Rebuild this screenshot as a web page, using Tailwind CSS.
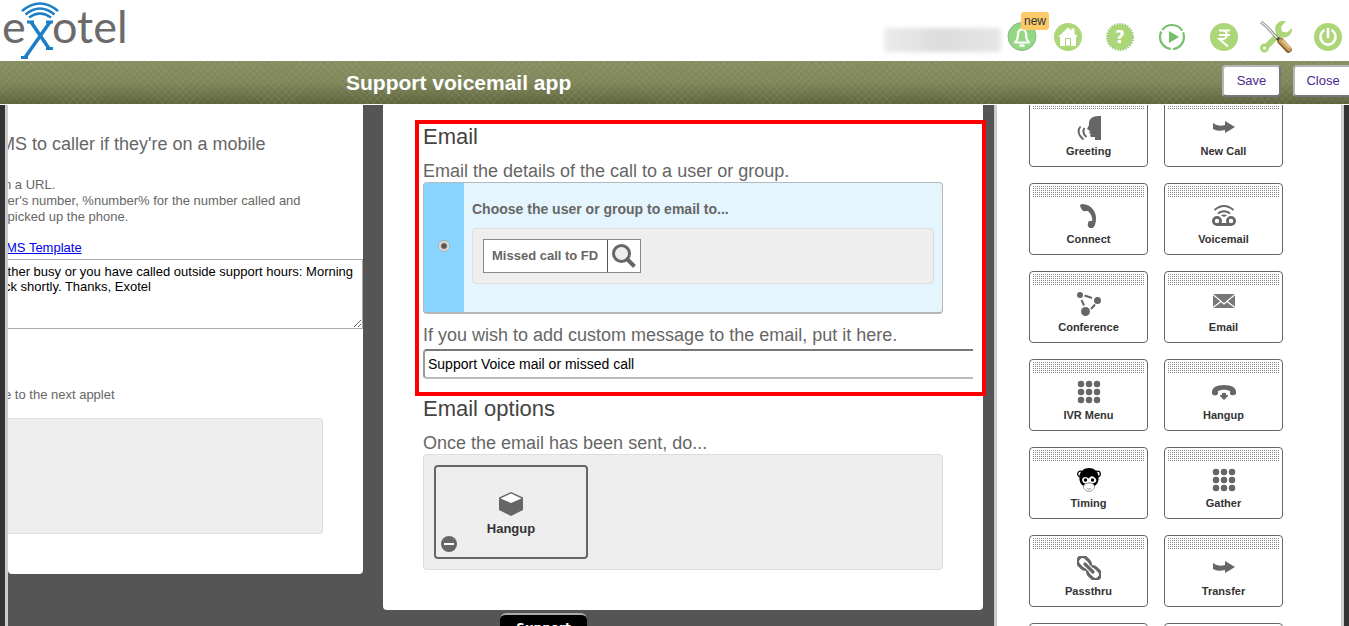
<!DOCTYPE html>
<html lang="en">
<head>
    <meta charset="UTF-8">
    <meta name="viewport" content="width=device-width, initial-scale=1.0">
    <title>Support voicemail app - Exotel</title>
    <script src="https://cdn.jsdelivr.net/npm/@tailwindcss/browser@4"></script>
</head>
<body class="h-screen flex flex-col overflow-hidden bg-white font-['Liberation_Sans',Arial,sans-serif] text-[13px] leading-4 text-[#666]">

    <!-- Top header -->
    <header class="h-[61px] shrink-0 flex items-start justify-between">
        <a href="#" aria-label="Exotel">
            <svg class="w-[130px] h-[61px] overflow-visible" viewBox="0 0 130 61" fill="none">
                <g fill="#6b6b6b" font-family="Lato, sans-serif" font-size="45">
                    <text x="2" y="43">e</text>
                    <text x="52" y="43">otel</text>
                </g>
                <g stroke="#1c7fc6" stroke-width="3">
                    <path d="M27 22h7M46 22h7M46 48.500h7M21 57.500h7"/>
                    <path stroke-width="3.500" d="M31 22L49 48.500M50 22L25 57.500"/>
                    <path stroke-width="2.500" d="M22 11Q40-4 58 11M25.500 14.500Q40 2.500 54.500 14.500M29 17.500Q40 9.500 51 17.500"/>
                </g>
            </svg>
        </a>
        <div class="flex items-center gap-[17px] pt-[21px] pr-[7px]">
            <div class="flex items-center gap-1.5">
                <span class="mt-1.5 w-[117px] h-6 rounded-sm bg-linear-to-r from-[#eceaec] via-[#dddcdd] to-[#e6e5e7] blur-[2px]"></span>
                <button type="button" aria-label="Notifications" class="relative">
                    <svg class="size-[30px]" viewBox="0 0 30 30" fill="none">
                        <circle cx="15" cy="14.500" r="14" fill="#93d984" stroke="#8fb58c"/>
                        <path d="M8 20.500c2-2 3-4 3-8 0-3 1.500-5 4-5s4 2 4 5c0 4 1 6 3 8z" stroke="#fff" stroke-width="2.200" stroke-linejoin="round"/>
                        <path d="M15 5v2.500M12.500 23.500h5" stroke="#fff" stroke-width="2.500"/>
                    </svg>
                    <span class="absolute left-3.5 -top-[10px] h-[18px] w-7 rounded-[3px] bg-[#fdca6a] text-[12px] leading-[18px] text-[#333]">new</span>
                </button>
            </div>
            <nav class="flex items-center gap-6">
                <a href="#" aria-label="Home">
                    <svg class="size-7" viewBox="0 0 28 28">
                        <circle cx="14" cy="14" r="14" fill="#acd678"/>
                        <path d="M4 14L14 4.500l3.500 3.300V5.500h3v5L24 14h-2v9H6v-9z" fill="#fff"/>
                        <path d="M11.500 15.500h5V23h-5z" fill="#fff" stroke="#acd678"/>
                    </svg>
                </a>
                <a href="#" aria-label="Help">
                    <svg class="size-7" viewBox="0 0 28 28">
                        <circle cx="14" cy="14" r="12.500" fill="#acd678"/>
                        <circle cx="14" cy="14" r="12.800" fill="none" stroke="#9ecb70" stroke-width="2.400" stroke-dasharray="1.600 1.080"/>
                        <text x="14" y="20" text-anchor="middle" font-size="17" font-weight="bold" fill="#fff" font-family="DejaVu Sans, sans-serif">?</text>
                    </svg>
                </a>
                <a href="#" aria-label="Play tour">
                    <svg class="size-7" viewBox="0 0 28 28">
                        <circle cx="14" cy="14" r="12" fill="none" stroke="#75c06b" stroke-width="2.200" stroke-dasharray="23.130 2" stroke-dashoffset="-19.900"/>
                        <path d="M11 8v12L21 14z" fill="#75c06b"/>
                    </svg>
                </a>
                <a href="#" aria-label="Billing">
                    <svg class="size-7" viewBox="0 0 28 28" fill="none">
                        <circle cx="14" cy="14" r="14" fill="#acd678"/>
                        <path d="M9 7.500h11M9 12h11M9 7.500h4c5 0 5 8.500 0 8.500H9.500l8.500 7.500" stroke="#fff" stroke-width="2.200"/>
                    </svg>
                </a>
                <a href="#" aria-label="Settings" class="-mx-0.5">
                    <svg class="size-8" viewBox="0 0 32 32" fill="none">
                        <path d="M6 26L19 13" stroke="#acd678" stroke-width="5.500"/>
                        <path fill-rule="evenodd" d="M0 27a4.500 4.500 0 1 0 9 0 4.500 4.500 0 1 0-9 0M3 27a1.500 1.500 0 1 0 3 0 1.500 1.500 0 1 0-3 0" fill="#acd678"/>
                        <path d="M26 0a8.500 8.500 0 1 0 6 7l-5 4.500-5-1-1-4.500z" fill="#acd678"/>
                        <path d="M1 1l5 4 12 13" stroke="#888" stroke-width="3"/>
                        <path d="M1 1l5 4 12 13" stroke="#eee" stroke-width="1.300"/>
                        <path d="M16 18l3-2 2 2-2 3z" fill="#333"/>
                        <path d="M20.500 20l8 8.500" stroke="#7a5a2c" stroke-width="6.500" stroke-linecap="round"/>
                        <path d="M21 20l8 8" stroke="#c9a05c" stroke-width="4.500" stroke-linecap="round"/>
                        <path d="M22.500 19.500l7 7" stroke="#ecd09a" stroke-width="1.500" stroke-linecap="round"/>
                    </svg>
                </a>
                <a href="#" aria-label="Log out">
                    <svg class="size-7" viewBox="0 0 28 28" fill="none">
                        <circle cx="14" cy="14" r="14" fill="#acd678"/>
                        <path d="M10.500 7a7.500 7.800 0 1 0 7 0M14 5v10" stroke="#fff" stroke-width="2.500"/>
                    </svg>
                </a>
            </nav>
        </div>
    </header>

    <!-- App title bar -->
    <div class="h-[43px] mb-px shrink-0 overflow-hidden flex items-center justify-between bg-[repeating-linear-gradient(45deg,#ffffff0d_0_1px,transparent_1px_5px),repeating-linear-gradient(-45deg,#ffffff0d_0_1px,transparent_1px_5px),linear-gradient(#868e60,#7f865a_50%,#5f643e)]">
        <h1 class="pl-[346px] text-[21px] leading-7 font-bold text-white whitespace-nowrap">Support voicemail app</h1>
        <div class="flex gap-3 pb-1 -mr-1">
            <button type="button" class="h-8 w-[59px] rounded border-2 border-[#b5b5b5] border-b-[#77777c] border-r-[#77777c] bg-white text-[#4b2a8c]">Save</button>
            <button type="button" class="h-8 w-[60px] rounded border-2 border-[#b5b5b5] border-b-[#77777c] bg-white text-[#4b2a8c]">Close</button>
        </div>
    </div>

    <main class="flex-1 min-h-0 flex bg-[#333] pl-[5px] pr-[5px]">
        <!-- Flow canvas -->
        <div class="flex-1 min-w-0 overflow-hidden flex items-start gap-5 bg-[#555] border-l-3 border-[#ccc] pr-[11px]">

            <!-- SMS applet, scrolled partly out of view -->
            <section class="flex-1 min-w-0 overflow-hidden rounded-b bg-white pt-7 pb-10 whitespace-nowrap">
                <h3 class="-ml-2 text-[18px] leading-[22px]">MS to caller if they're on a mobile</h3>
                <p class="-ml-1 mt-[22px]">n a URL.<br>&nbsp;er's number, %number% for the number called and<br>&nbsp;picked up the phone.</p>
                <a href="#" class="block -ml-0.5 mt-[15px] text-[#00e] underline">MS Template</a>
                <div class="-ml-2 mt-[3px] flex">
                    <textarea aria-label="SMS text" class="flex-1 h-[70px] border border-[#a9a9a9] pl-[3px] pt-1 leading-[15px] text-black resize">&nbsp;ther busy or you have called outside support hours: Morning
ck shortly. Thanks, Exotel</textarea>
                </div>
                <p class="-ml-1 mt-[58px]">e to the next applet</p>
                <div class="mt-[15px] mr-10 h-[116px] rounded-r border border-l-0 border-[#ddd] bg-[#eee]"></div>
            </section>

            <!-- Voicemail applet -->
            <section class="relative w-[600px] shrink-0 rounded-b bg-white px-10 pt-[18px] pb-10">
                <h3 class="text-[22px] leading-7 text-[#444]">Email</h3>
                <p class="mt-[9px] text-[18px] leading-[22px]">Email the details of the call to a user or group.</p>
                <div class="h-[132px] flex overflow-hidden rounded border border-b-2 border-[#b5b8ba] bg-[#e4f5fe]">
                    <div class="w-10 pb-1 shrink-0 flex items-center justify-center bg-[#87d5ff]">
                        <input type="radio" id="emailTo" name="emailTo" checked class="size-3 appearance-none rounded-full border border-[#aaa] bg-[radial-gradient(circle,#555_0_2px,#e4e4e4_4px)]">
                    </div>
                    <div class="flex-1 p-2 pt-[18px]">
                        <label for="emailTo" class="block text-[14px] leading-4 font-bold">Choose the user or group to email to...</label>
                        <div class="mt-[11px] h-14 flex items-center rounded border border-[#ddd] bg-[#eee] px-2.5">
                            <div class="h-[34px] flex border border-[#888] bg-white">
                                <span class="w-[123px] pl-2 font-bold leading-8">Missed call to FD</span>
                                <button type="button" aria-label="Search" class="w-[33px] border-l border-[#555] flex items-center justify-center">
                                    <svg class="size-6" viewBox="0 0 24 24" fill="none" stroke="#666">
                                        <circle cx="9.500" cy="9.500" r="8" fill="#eee" stroke-width="3"/>
                                        <path d="M15.500 15.500L22.500 22.500" stroke-width="4"/>
                                    </svg>
                                </button>
                            </div>
                        </div>
                    </div>
                </div>
                <label for="customMessage" class="block mt-2.5 text-[18px] leading-[22px]">If you wish to add custom message to the email, put it here.</label>
                <div class="-mr-[30px] mt-[3px] flex">
                    <input type="text" id="customMessage" value="Support Voice mail or missed call"
                           class="flex-1 h-[30px] rounded-l border-2 border-r-0 border-t-[#777] border-l-[#999] border-b-[#bbb] pl-[3px] text-[14px] text-black">
                </div>

                <h3 class="mt-4 text-[22px] leading-7 text-[#444]">Email options</h3>
                <p class="mt-[9px] text-[18px] leading-[22px]">Once the email has been sent, do...</p>
                <div class="h-[116px] rounded border border-[#ddd] bg-[#eee] p-2.5">
                    <div class="relative w-[154px] h-[94px] rounded border-2 border-[#666] flex flex-col items-center pt-[25px]">
                        <svg class="size-6" viewBox="0 0 24 24">
                            <path d="M12 0l12 5.500V18l-12 6L0 18V5.500z" fill="#666"/>
                            <path d="M12 1.500l10.500 5L12 11 1.500 6.500z" fill="#fff"/>
                        </svg>
                        <span class="mt-[5px] font-bold text-[#333]">Hangup</span>
                        <button type="button" aria-label="Remove" class="absolute left-[5px] bottom-[5px]">
                            <svg class="size-4" viewBox="0 0 16 16"><circle cx="8" cy="8" r="8" fill="#666"/><path d="M3 7h10v2H3z" fill="#fff"/></svg>
                        </button>
                    </div>
                </div>
                <div class="absolute left-8 top-[15px] w-[571px] h-[276px] border-4 border-[#f00] pointer-events-none"></div>
            </section>
        </div>

        <!-- Applet palette -->
        <aside class="w-[350px] shrink-0 overflow-hidden border-x-3 border-[#ccc] bg-white pl-8">
            <div class="-mt-2.5 grid grid-cols-[119px_119px] gap-4 text-[11px] font-bold text-center text-[#333]">
                <div class="h-[72px] rounded border border-[#666] p-0.5 flex flex-col items-center">
                    <div class="h-3 w-full bg-[conic-gradient(#888_25%,transparent_0)] bg-[length:2px_2px]"></div>
                    <svg class="size-6 mt-1.5" viewBox="0 0 24 24" fill="none" stroke="#666">
                        <path d="M24 0v24h-6v-3h-4l-1-2 1-1-2-1 1-2-3-2 2-4C11 3 16 0 21 0z" fill="#666" stroke="none"/>
                        <path d="M7.500 12q-3 5 2 9M3.500 10.500q-5 6 3 13" stroke-width="1.900"/>
                    </svg>
                    <span class="mt-[3px]">Greeting</span>
                </div>
                <div class="h-[72px] rounded border border-[#666] p-0.5 flex flex-col items-center">
                    <div class="h-3 w-full bg-[conic-gradient(#888_25%,transparent_0)] bg-[length:2px_2px]"></div>
                    <svg class="size-6 mt-1.5" viewBox="0 0 24 24" fill="#666"><path d="M1 7q5 4 12 2V5l10 6-10 6v-3Q5 16 1 13z"/></svg>
                    <span class="mt-[3px]">New Call</span>
                </div>
                <div class="h-[72px] rounded border border-[#666] p-0.5 flex flex-col items-center">
                    <div class="h-3 w-full bg-[conic-gradient(#888_25%,transparent_0)] bg-[length:2px_2px]"></div>
                    <svg class="size-6 mt-1.5" viewBox="0 0 24 24" fill="#666"><path d="M3 2q0-2 3-2c9 1 13 8 13 14q0 7-3 10h-3q-3-1-2-5l1-2 3 0q1-5-4-10L9 7Q7 8 5 6z"/></svg>
                    <span class="mt-[3px]">Connect</span>
                </div>
                <div class="h-[72px] rounded border border-[#666] p-0.5 flex flex-col items-center">
                    <div class="h-3 w-full bg-[conic-gradient(#888_25%,transparent_0)] bg-[length:2px_2px]"></div>
                    <svg class="size-6 mt-1.5" viewBox="0 0 24 24" fill="none" stroke="#666">
                        <path d="M2.500 6Q12-2 21.500 6M6 9.500Q12 5 18 9.500" stroke-width="1.900"/>
                        <path d="M9 11.500q3-2 6 0l-3 1.500z" fill="#666" stroke="none"/>
                        <circle cx="5" cy="17" r="3.600" stroke-width="2.800"/>
                        <circle cx="19" cy="17" r="3.600" stroke-width="2.800"/>
                        <path d="M5 20.500h14" stroke-width="3"/>
                    </svg>
                    <span class="mt-[3px]">Voicemail</span>
                </div>
                <div class="h-[72px] rounded border border-[#666] p-0.5 flex flex-col items-center">
                    <div class="h-3 w-full bg-[conic-gradient(#888_25%,transparent_0)] bg-[length:2px_2px]"></div>
                    <svg class="size-6 mt-1.5" viewBox="0 0 24 24" fill="#666">
                        <circle cx="3" cy="3" r="3"/><circle cx="20.500" cy="8.500" r="3.500"/><circle cx="8.500" cy="19.500" r="4.500"/>
                        <path d="M7.500 3.500l7.500 2.500M4.500 8l2.500 5.500M14 17l4-4.500" stroke="#666" stroke-width="2"/>
                    </svg>
                    <span class="mt-[3px]">Conference</span>
                </div>
                <div class="h-[72px] rounded border border-[#666] p-0.5 flex flex-col items-center">
                    <div class="h-3 w-full bg-[conic-gradient(#888_25%,transparent_0)] bg-[length:2px_2px]"></div>
                    <svg class="size-6 mt-1.5" viewBox="0 0 24 24" fill="none">
                        <path d="M1 2h22v14H1z" fill="#76787a"/>
                        <path d="M1 2.500l11 9.500 11-9.500M1 15.500l8-6M23 15.500l-8-6" stroke="#fff" stroke-width="1.200"/>
                    </svg>
                    <span class="mt-[3px]">Email</span>
                </div>
                <div class="h-[72px] rounded border border-[#666] p-0.5 flex flex-col items-center">
                    <div class="h-3 w-full bg-[conic-gradient(#888_25%,transparent_0)] bg-[length:2px_2px]"></div>
                    <svg class="size-6 mt-1.5" viewBox="0 0 24 24" fill="none" stroke="#666" stroke-width="6.500" stroke-linecap="round"><path d="M4 4h0M12 4h0M20 4h0M4 12h0M12 12h0M20 12h0M4 20h0M12 20h0M20 20h0"/></svg>
                    <span class="mt-[3px]">IVR Menu</span>
                </div>
                <div class="h-[72px] rounded border border-[#666] p-0.5 flex flex-col items-center">
                    <div class="h-3 w-full bg-[conic-gradient(#888_25%,transparent_0)] bg-[length:2px_2px]"></div>
                    <svg class="size-6 mt-1.5" viewBox="0 0 24 24" fill="#666">
                        <path d="M0 14V11Q1 5 12 5t12 6v3q-2 2-5 1l-1-1v-3Q12 8 6 11v3q-3 3-6 0z"/>
                        <path d="M10 13h4v2h2v1l-4 4-4-4v-1h2z"/>
                    </svg>
                    <span class="mt-[3px]">Hangup</span>
                </div>
                <div class="h-[72px] rounded border border-[#666] p-0.5 flex flex-col items-center">
                    <div class="h-3 w-full bg-[conic-gradient(#888_25%,transparent_0)] bg-[length:2px_2px]"></div>
                    <svg class="size-6 mt-1.5" viewBox="0 0 24 24">
                        <circle cx="3.500" cy="6" r="2.800" fill="#fff" stroke="#000" stroke-width="1.200"/>
                        <circle cx="20.500" cy="6" r="2.800" fill="#fff" stroke="#000" stroke-width="1.200"/>
                        <path d="M12 0C17 0 21 3 21.500 8q1 8-5.500 11H8Q1.500 16 2.500 8C3 3 7 0 12 0z" fill="#000"/>
                        <path d="M12 10.500Q9 8 6.500 9.500t-.5 5q3 2 6 0 3 2 6 0t-.5-5-5.500 1z" fill="#fff"/>
                        <path d="M12 15q6 0 5.500 5-2 3.500-5.500 3.500T6.500 20Q6 15 12 15z" fill="#fff" stroke="#777" stroke-width=".7"/>
                        <circle cx="8.500" cy="12" r="1.700"/><circle cx="15.500" cy="12" r="1.700"/>
                        <path d="M10 20.500q2 1.500 4 0" fill="none" stroke="#777" stroke-width=".8"/>
                    </svg>
                    <span class="mt-[3px]">Timing</span>
                </div>
                <div class="h-[72px] rounded border border-[#666] p-0.5 flex flex-col items-center">
                    <div class="h-3 w-full bg-[conic-gradient(#888_25%,transparent_0)] bg-[length:2px_2px]"></div>
                    <svg class="size-6 mt-1.5" viewBox="0 0 24 24" fill="none" stroke="#666" stroke-width="6.500" stroke-linecap="round"><path d="M4 4h0M12 4h0M20 4h0M4 12h0M12 12h0M20 12h0M4 20h0M12 20h0M20 20h0"/></svg>
                    <span class="mt-[3px]">Gather</span>
                </div>
                <div class="h-[72px] rounded border border-[#666] p-0.5 flex flex-col items-center">
                    <div class="h-3 w-full bg-[conic-gradient(#888_25%,transparent_0)] bg-[length:2px_2px]"></div>
                    <svg class="size-6 mt-1.5" viewBox="0 0 24 24" fill="none" stroke="#666" stroke-width="3.200">
                        <rect x="0" y="2" width="14" height="10" rx="5" transform="rotate(45 7 7)"/>
                        <rect x="10" y="12" width="14" height="10" rx="5" transform="rotate(45 17 17)"/>
                        <path d="M8 8l8 8" stroke="#fff" stroke-width="5.500" stroke-linecap="round"/>
                        <path d="M8 8l8 8" stroke-linecap="round"/>
                    </svg>
                    <span class="mt-[3px]">Passthru</span>
                </div>
                <div class="h-[72px] rounded border border-[#666] p-0.5 flex flex-col items-center">
                    <div class="h-3 w-full bg-[conic-gradient(#888_25%,transparent_0)] bg-[length:2px_2px]"></div>
                    <svg class="size-6 mt-1.5" viewBox="0 0 24 24" fill="#666"><path d="M1 7q5 4 12 2V5l10 6-10 6v-3Q5 16 1 13z"/></svg>
                    <span class="mt-[3px]">Transfer</span>
                </div>
                <div class="h-[72px] rounded border border-[#666]"></div>
                <div class="h-[72px] rounded border border-[#666]"></div>
            </div>
        </aside>
    </main>

    <!-- Support tab pinned to the window's lower edge -->
    <button type="button" class="fixed left-[500px] -bottom-[15px] h-7 w-[87px] rounded-t-md border-t-2 border-[#aaa] bg-black font-['DejaVu_Sans',sans-serif] text-[12px] font-bold text-white">Support</button>
</body>
</html>
